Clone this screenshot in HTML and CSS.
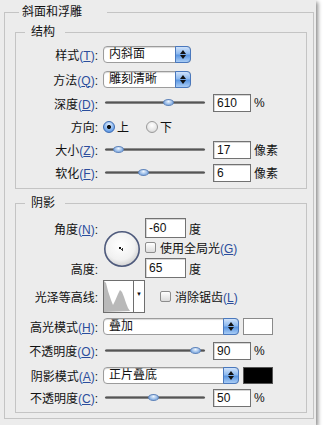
FILE: index.html
```html
<!DOCTYPE html>
<html lang="zh">
<head>
    <meta charset="UTF-8">
    <title>斜面和浮雕</title>
    <link rel="stylesheet" href="styles.css">
</head>
<body>
    <div class="dialog">
        <fieldset class="group">
            <legend class="group-title">斜面和浮雕</legend>

            <fieldset class="box box-structure">
                <legend class="box-title">结构</legend>

                <div class="row row-25">
                    <span class="label">样式<span class="key">(<u>T</u>)</span>:</span>
                    <div class="select select-short"><span class="select-text">内斜面</span><span class="select-btn"></span></div>
                </div>
                <div class="row row-24">
                    <span class="label">方法<span class="key">(<u>Q</u>)</span>:</span>
                    <div class="select select-short"><span class="select-text">雕刻清晰</span><span class="select-btn"></span></div>
                </div>
                <div class="row row-24">
                    <span class="label">深度<span class="key">(<u>D</u>)</span>:</span>
                    <div class="slider"><div class="track"></div><div class="thumb" style="left: 60px"></div></div>
                    <span class="field">610</span>
                    <span class="unit">%</span>
                </div>
                <div class="row row-23">
                    <span class="label">方向:</span>
                    <span class="radio checked"></span>
                    <span class="radio-text">上</span>
                    <span class="radio"></span>
                    <span class="radio-text">下</span>
                </div>
                <div class="row row-23">
                    <span class="label">大小<span class="key">(<u>Z</u>)</span>:</span>
                    <div class="slider"><div class="track"></div><div class="thumb" style="left: 10px"></div></div>
                    <span class="field">17</span>
                    <span class="unit">像素</span>
                </div>
                <div class="row row-23">
                    <span class="label">软化<span class="key">(<u>F</u>)</span>:</span>
                    <div class="slider"><div class="track"></div><div class="thumb" style="left: 35px"></div></div>
                    <span class="field">6</span>
                    <span class="unit">像素</span>
                </div>
            </fieldset>

            <fieldset class="box box-shading">
                <legend class="box-title">阴影</legend>

                <div class="angle">
                    <span class="label angle-label-top">角度<span class="key">(<u>N</u>)</span>:</span>
                    <span class="label angle-label-bottom">高度:</span>
                    <div class="dial">
                        <svg width="38" height="38" viewBox="0 0 38 38">
                            <defs>
                                <radialGradient id="dialFill" cx="45%" cy="40%" r="60%">
                                    <stop offset="0" stop-color="#ffffff"/>
                                    <stop offset="0.7" stop-color="#f1f1f1"/>
                                    <stop offset="1" stop-color="#d2d2d2"/>
                                </radialGradient>
                            </defs>
                            <circle cx="19" cy="19" r="17.2" fill="url(#dialFill)" stroke="#4e5a7c" stroke-width="1.6"/>
                            <rect x="16" y="17" width="2" height="2" fill="#111"/>
                            <rect x="18" y="19" width="2" height="1" fill="#333"/>
                            <rect x="19" y="18" width="1" height="3" fill="#333"/>
                        </svg>
                    </div>
                    <div class="angle-top">
                        <span class="field field-wide">-60</span>
                        <span class="unit">度</span>
                    </div>
                    <div class="angle-mid">
                        <span class="check"></span>
                        <span class="check-text">使用全局光<span class="key">(<u>G</u>)</span></span>
                    </div>
                    <div class="angle-bottom">
                        <span class="field field-wide">65</span>
                        <span class="unit">度</span>
                    </div>
                </div>

                <div class="row row-36">
                    <span class="label">光泽等高线:</span>
                    <div class="contour">
                        <svg class="contour-thumb" width="29" height="31" viewBox="0 0 29 31">
                            <rect width="29" height="31" fill="#fff"/>
                            <polygon points="0,0 2,2 4,10 7,19 9,24 11,20 14,13 16,9 18,11 20,16 22,22 24,27 26,30 0,31" fill="#b9b9b9"/>
                        </svg>
                        <span class="contour-btn">▼</span>
                    </div>
                    <span class="check check-contour"></span>
                    <span class="check-text">消除锯齿<span class="key">(<u>L</u>)</span></span>
                </div>
                <div class="row row-24">
                    <span class="label">高光模式<span class="key">(<u>H</u>)</span>:</span>
                    <div class="select select-long"><span class="select-text">叠加</span><span class="select-btn"></span></div>
                    <span class="swatch swatch-white"></span>
                </div>
                <div class="row row-25">
                    <span class="label">不透明度<span class="key">(<u>O</u>)</span>:</span>
                    <div class="slider"><div class="track"></div><div class="thumb" style="left: 87px"></div></div>
                    <span class="field">90</span>
                    <span class="unit">%</span>
                </div>
                <div class="row row-24">
                    <span class="label">阴影模式<span class="key">(<u>A</u>)</span>:</span>
                    <div class="select select-long"><span class="select-text">正片叠底</span><span class="select-btn"></span></div>
                    <span class="swatch swatch-black"></span>
                </div>
                <div class="row row-21">
                    <span class="label">不透明度<span class="key">(<u>C</u>)</span>:</span>
                    <div class="slider"><div class="track"></div><div class="thumb" style="left: 45px"></div></div>
                    <span class="field">50</span>
                    <span class="unit">%</span>
                </div>
            </fieldset>
        </fieldset>
    </div>
</body>
</html>
```

FILE: styles.css
```css
body {
    margin: 0;
    background: #ffffff;
    font-family: "Liberation Sans", "Noto Sans CJK SC", sans-serif;
    font-size: 12px;
    color: #111;
}
.dialog {
    width: 316px;
    height: 425px;
    box-sizing: border-box;
    padding: 4px 2px 0 4px;
    background: #ececec;
    box-shadow: 2px 2px 4px rgba(0, 0, 0, 0.45);
}
.group,
.box {
    margin: 0;
    min-width: 0;
    border: 1px solid #c4c4c4;
}
.group {
    padding: 4px 6px 5px 10px;
}
.group-title {
    margin-left: 4px;
    padding: 0 25px 0 3px;
    line-height: 16px;
    font-size: 12px;
}
.box-structure {
    padding: 2px 0 4px 0;
}
.box-shading {
    margin-top: 6px;
    padding: 7px 0 4px 0;
}
.box-title {
    margin-left: 9px;
    padding: 0 10px 0 6px;
    line-height: 16px;
}
.row {
    display: flex;
    align-items: center;
}
.row-21 { height: 21px; }
.row-23 { height: 23px; }
.row-24 { height: 24px; }
.row-25 { height: 25px; }
.row-36 { height: 36px; }
.label {
    width: 82px;
    margin-right: 5px;
    text-align: right;
    white-space: nowrap;
}
.key {
    color: #2b4d9c;
}
.key u {
    text-decoration-thickness: 1px;
    text-underline-offset: 1px;
}

/* select boxes */
.select {
    display: flex;
    height: 17px;
    box-sizing: border-box;
    border: 1px solid #9c9c9c;
    border-radius: 4px;
    background: #fff;
    box-shadow: inset 0 1px 1px rgba(0, 0, 0, 0.15);
}
.select-short { width: 88px; }
.select-long { width: 136px; }
.select-text {
    flex: 1;
    padding-left: 5px;
    line-height: 15px;
    white-space: nowrap;
}
.select-btn {
    position: relative;
    width: 14px;
    margin: -1px -1px -1px 0;
    border: 1px solid #4a78bd;
    border-radius: 0 4px 4px 0;
    background: linear-gradient(#cfe2fa, #8db9ef 45%, #5b97e3 55%, #a9ccf4);
}
.select-btn::before,
.select-btn::after {
    content: "";
    position: absolute;
    left: 4px;
    border-left: 3px solid transparent;
    border-right: 3px solid transparent;
}
.select-btn::before {
    top: 3px;
    border-bottom: 4px solid #111;
}
.select-btn::after {
    bottom: 3px;
    border-top: 4px solid #111;
}

/* sliders */
.slider {
    position: relative;
    width: 104px;
    height: 10px;
    margin-right: 6px;
}
.track {
    margin: 3px 2px 0 2px;
    height: 3px;
    border-radius: 2px;
    background: linear-gradient(#a5a5a5, #555 50%, #9a9a9a);
}
.thumb {
    position: absolute;
    top: 1px;
    width: 11px;
    height: 7px;
    box-sizing: border-box;
    border: 1px solid #5f84bb;
    border-radius: 50%;
    background: radial-gradient(ellipse at 50% 30%, #eef5fd, #86afe3 70%, #5b8cd0);
}

/* text fields */
.field {
    width: 38px;
    height: 18px;
    box-sizing: border-box;
    padding-left: 3px;
    border: 1px solid #727272;
    background: #fff;
    box-shadow: inset 1px 1px 0 #d6d6d6;
    line-height: 16px;
}
.field-wide {
    width: 41px;
    height: 20px;
    line-height: 18px;
}
.unit {
    margin-left: 3px;
}

/* radios and checks */
.radio {
    width: 12px;
    height: 12px;
    box-sizing: border-box;
    border: 1px solid #9a9a9a;
    border-radius: 50%;
    background: radial-gradient(circle at 50% 35%, #ffffff, #e6e6e6 60%, #c9c9c9);
}
.radio.checked {
    border-color: #3d6cb3;
    background: radial-gradient(circle, #111 0 1.8px, transparent 2.3px),
        radial-gradient(circle at 50% 30%, #e4effc, #7fb0ee 60%, #3f7fd6);
}
.radio-text {
    margin-left: 2px;
    margin-right: 17px;
}
.check {
    width: 11px;
    height: 11px;
    box-sizing: border-box;
    border: 1px solid #8c8c8c;
    border-radius: 2px;
    background: linear-gradient(#ffffff, #dcdcdc);
}
.check-text {
    margin-left: 4px;
    white-space: nowrap;
}
.check-contour {
    margin-left: 15px;
}

/* angle block */
.angle {
    display: grid;
    grid-template-columns: 87px 42px 1fr;
    grid-template-rows: 20px 20px 20px;
    align-items: center;
}
.angle .label {
    margin-right: 0;
    padding-right: 5px;
    width: 82px;
}
.angle-label-top { grid-column: 1; grid-row: 1; }
.angle-label-bottom { grid-column: 1; grid-row: 3; }
.dial {
    grid-column: 2;
    grid-row: 1 / 4;
    align-self: center;
    height: 38px;
    margin-top: 2px;
}
.angle-top,
.angle-mid,
.angle-bottom {
    display: flex;
    align-items: center;
    grid-column: 3;
}
.angle-top { grid-row: 1; }
.angle-mid { grid-row: 2; margin-top: -2px; }
.angle-bottom { grid-row: 3; }

/* contour picker */
.contour {
    display: flex;
    height: 33px;
    box-sizing: border-box;
    border: 1px solid #6e6e6e;
    background: #fff;
}
.contour-btn {
    width: 10px;
    border-left: 1px solid #6e6e6e;
    font-size: 6px;
    line-height: 27px;
    text-align: center;
}

/* colour swatches */
.swatch {
    width: 30px;
    height: 17px;
    margin-left: 4px;
    box-sizing: border-box;
    border: 1px solid #8a8a8a;
}
.swatch-white { background: #fff; }
.swatch-black { background: #000; border-color: #555; }
```
